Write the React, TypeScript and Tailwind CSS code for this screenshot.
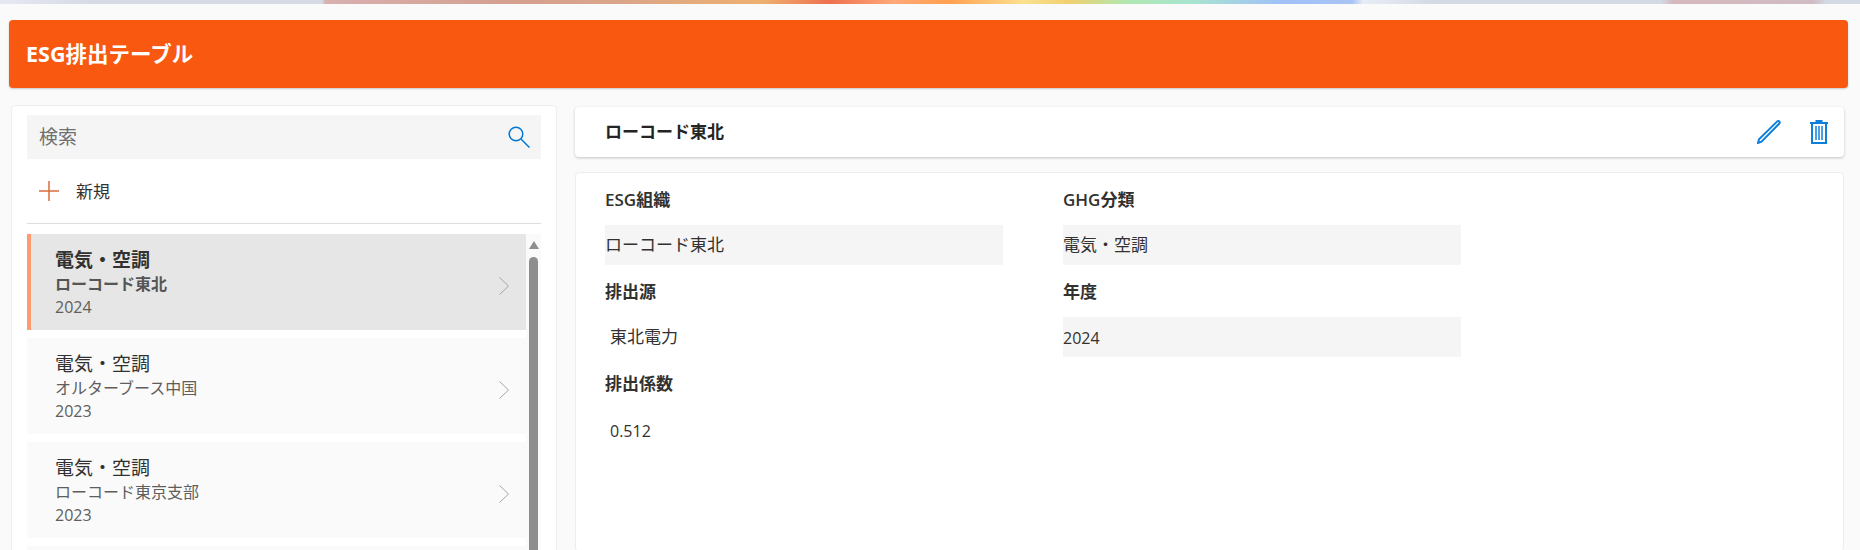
const items = [
  { title: '電気・空調', org: 'ローコード東北', year: '2024', active: true },
  { title: '電気・空調', org: 'オルターブース中国', year: '2023', active: false },
  { title: '電気・空調', org: 'ローコード東京支部', year: '2023', active: false },
]

function Chevron() {
  return (
    <svg className="w-[10px] h-[18px] mt-[8px] shrink-0" viewBox="0 0 10 18" fill="none" stroke="#a6a6a6" strokeWidth="1">
      <path d="M0.5 0.5 9.5 9 0.5 17.5" />
    </svg>
  )
}

function ListRow({ title, org, year, active }: { title: string; org: string; year: string; active: boolean }) {
  return (
    <div
      className={`h-[96px] shrink-0 flex items-center pr-[17px] ${
        active ? 'bg-[#e6e6e6] border-l-4 border-[#ff9b70] pl-[24px]' : 'bg-[#fafafa] pl-[28px]'
      }`}
    >
      <div className="flex-1 min-w-0 flex flex-col pt-[3px]">
        <div className={`text-[19px] leading-[24px] text-[#323130] ${active ? 'font-bold' : ''}`}>{title}</div>
        <div className={`text-[16px] leading-[24px] ${active ? 'font-bold text-[#555]' : 'text-[#605e5c]'}`}>{org}</div>
        <div className="text-[16px] leading-[23px] text-[#605e5c]">{year}</div>
      </div>
      <Chevron />
    </div>
  )
}

function Field({ label, value, filled, valueClass }: { label: string; value: string; filled: boolean; valueClass: string }) {
  return (
    <div className="h-[92px] w-[398px]">
      <div className="h-[40px] flex items-center text-[17px] font-semibold text-[#323130]">{label}</div>
      <div className={`h-[40px] mt-[5px] flex items-center text-[#323130] ${valueClass} ${filled ? 'bg-[#f5f5f5]' : 'pl-[5px]'}`}>
        {value}
      </div>
    </div>
  )
}

export default function App() {
  return (
    <div className="h-[550px] overflow-hidden bg-[#fafafa] font-['Open_Sans','Noto_Sans_CJK_JP',sans-serif]">
      {/* banner strip */}
      <div className="h-[4px] bg-[linear-gradient(90deg,#e6e9f2_0%,#d5dae5_5%,#d5dae5_17.3%,#d8b0b0_17.5%,#d4a090_27%,#d9a58a_33%,#eeb070_41%,#ee7050_44.6%,#ffa878_48%,#ffa050_51%,#fbe090_55%,#f0d070_57.5%,#b0e8b0_60.5%,#a8e4d0_64%,#a0c0f8_69%,#a8c4f4_72.7%,#e8ecf6_73.3%,#d4dae4_77%,#d4dae4_89.3%,#d4b8bc_90%,#d0bcc4_97.5%,#d4dae4_98.2%)]" />

      <div className="pl-[9px] pr-[12px] pt-[16px]">
        <div className="h-[68px] bg-[#f85810] rounded-[4px] shadow-[0_1px_2px_rgba(0,0,0,0.2)] flex items-center pl-[17px]">
          <h1 className="text-[21.5px] font-bold text-white pt-[1px]">ESG排出テーブル</h1>
        </div>

        <div className="flex items-start pl-[2px] pr-[4px] mt-[17px] gap-[18px]">
          {/* list panel */}
          <div className="w-[546px] shrink-0 h-[460px] bg-white border border-[#ededed] rounded-[4px] pl-[15px] pr-[15px] pt-[9px]">
            <div className="h-[44px] bg-[#f5f5f5] flex items-center justify-between pl-[12px] pr-[11px]">
              <span className="text-[19px] text-[#707070] pt-[1px]">検索</span>
              <svg className="w-[22px] h-[22px]" viewBox="0 0 22 22" fill="none" stroke="#0078d4" strokeWidth="1.5">
                <circle cx="8" cy="8" r="6.8" />
                <path d="M13 13 21.5 21.5" />
              </svg>
            </div>
            <div className="h-[65px] flex items-center pl-[12px] gap-[17px] border-b border-[#dedede]">
              <svg className="w-[20px] h-[20px]" viewBox="0 0 20 20" fill="none" stroke="#dc6b3f" strokeWidth="1.5">
                <path d="M10 0v20M0 10h20" />
              </svg>
              <span className="text-[17px] text-[#323130] pt-[1px]">新規</span>
            </div>
            <div className="flex mt-[10px]">
              <div className="w-[499px] shrink-0 flex flex-col gap-[8px]">
                {items.map((it, i) => (
                  <ListRow key={i} {...it} />
                ))}
                <div className="h-[96px] shrink-0 bg-[#fafafa]" />
              </div>
              <div className="w-[15px] bg-[#fafafa] flex flex-col items-center pt-[7px]">
                <div className="w-0 h-0 border-l-[5px] border-r-[5px] border-b-[8px] border-l-transparent border-r-transparent border-b-[#8e8e8e]" />
                <div className="w-[9px] h-[400px] mt-[8px] bg-[#8e8e8e] rounded-t-[5px]" />
              </div>
            </div>
          </div>

          {/* detail */}
          <div className="flex-1 min-w-0 flex flex-col gap-[15px] pt-[2px]">
            <div className="h-[50px] bg-white rounded-[4px] shadow-[0_1px_3px_rgba(0,0,0,0.22)] flex items-center justify-between pl-[30px] pr-[16px]">
              <span className="text-[17px] font-bold text-[#242424]">ローコード東北</span>
              <div className="flex items-center gap-[29px]">
                <svg className="w-[24px] h-[24px]" viewBox="0 0 24 24" fill="none" stroke="#0f7fdc" strokeWidth="2">
                  <path d="M1 23 2 19.2 20 1.6c.8-.8 1.7-.8 2.3-.1.6.6.5 1.5-.2 2.2L4.5 21.6Z" />
                </svg>
                <svg className="w-[18px] h-[24px]" viewBox="0 0 18 24" fill="none" stroke="#0f7fdc" strokeWidth="2">
                  <path d="M0 3h18M6.5 2.5V1h5v1.5" />
                  <path d="M2 3v20h14V3" />
                  <path d="M6 6v14M9 6v14M12 6v14" strokeWidth="1.5" />
                </svg>
              </div>
            </div>

            <div className="h-[380px] bg-white border border-[#ededed] rounded-[4px] pl-[29px] pt-[7px]">
              <div className="flex gap-[60px]">
                <div className="flex flex-col">
                  <Field label="ESG組織" value="ローコード東北" filled valueClass="text-[17px]" />
                  <Field label="排出源" value="東北電力" filled={false} valueClass="text-[17px]" />
                  <Field label="排出係数" value="0.512" filled={false} valueClass="text-[16px] pt-[4px]" />
                </div>
                <div className="flex flex-col">
                  <Field label="GHG分類" value="電気・空調" filled valueClass="text-[17px]" />
                  <Field label="年度" value="2024" filled valueClass="text-[16px] pt-[2px]" />
                </div>
              </div>
            </div>
          </div>
        </div>
      </div>
    </div>
  )
}
